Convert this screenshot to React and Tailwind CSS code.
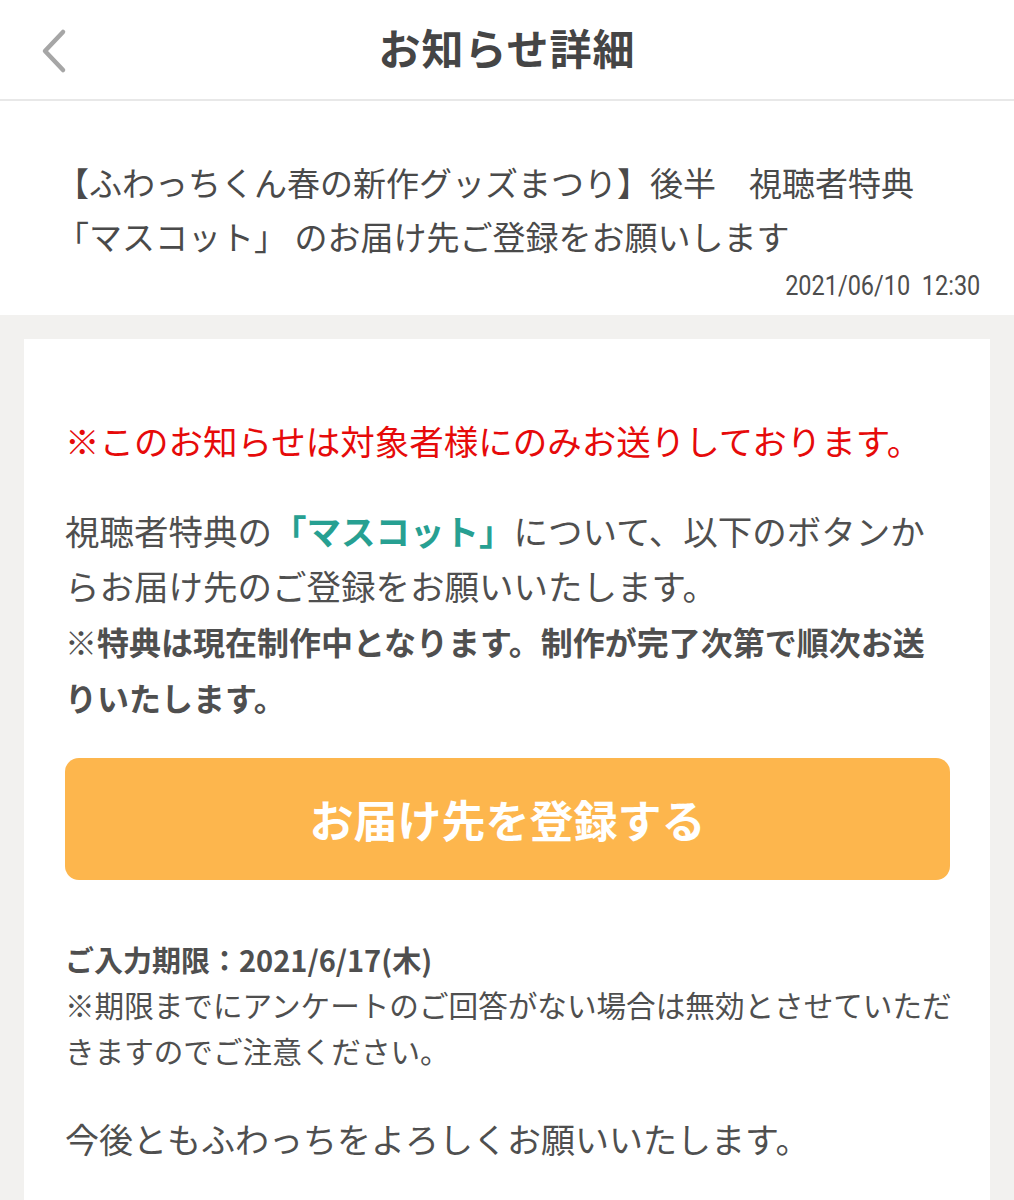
import React from 'react'

const JP = { fontFamily: '"Noto Sans CJK JP", "Noto Sans", sans-serif' }

function Header() {
  return (
    <div className="relative h-[101px] flex items-center justify-center bg-white border-b-2 border-[#e8e8e8]">
      <button className="absolute left-[40px] top-[28px] w-[30px] h-[46px] flex items-center justify-center">
        <svg width="30" height="46" viewBox="0 0 30 46" fill="none">
          <polyline points="23,4 5,23 23,42" stroke="#a6a6a6" strokeWidth="4.5" strokeLinecap="round" strokeLinejoin="round" />
        </svg>
      </button>
      <h1 className="text-[42px] font-bold text-[#454545] tracking-[1px] mt-[-6px]">お知らせ詳細</h1>
    </div>
  )
}

function NoticeTitle() {
  return (
    <div className="bg-white pl-[56px] pr-[34px] pt-[54px] pb-[14px]">
      <p className="text-[33px] leading-[54px] text-[#4a4a4a] whitespace-nowrap">
        【ふわっちくん春の新作グッズまつり】後半　視聴者特典<br />
        「マスコット」 のお届け先ご登録をお願いします
      </p>
      <div className="mt-[8px] flex justify-end">
        <span
          className="inline-block text-[27px] leading-[30px] text-[#4d4d4d] origin-right scale-x-[0.87]"
          style={{ fontFamily: 'Roboto, "Liberation Sans", sans-serif' }}
        >
          2021/06/10&nbsp;&nbsp;12:30
        </span>
      </div>
    </div>
  )
}

export default function App() {
  return (
    <div className="w-[1014px] h-[1200px] overflow-hidden bg-[#f2f1ef]" style={JP}>
      <Header />
      <NoticeTitle />
      <div className="pt-[24px] px-[24px]">
        <div className="bg-white pl-[41px] pr-[30px] pt-[74px] pb-[60px]">
          <p className="text-[34.5px] leading-[55px] text-[#e60a0a] whitespace-nowrap">
            ※このお知らせは対象者様にのみお送りしております。
          </p>

          <p className="mt-[35px] text-[34.5px] leading-[55px] text-[#4f4f4f] whitespace-nowrap">
            視聴者特典の<span className="font-bold text-[#27a092]">「マスコット」</span>について、以下のボタンか<br />
            らお届け先のご登録をお願いいたします。<br />
            <span className="font-bold text-[32px]">
              ※特典は現在制作中となります。制作が完了次第で順次お送<br />
              りいたします。
            </span>
          </p>

          <div className="pr-[10px]">
            <button className="mt-[33px] w-full h-[122px] rounded-[14px] bg-[#fdb64d] flex items-center justify-center">
              <span className="text-[44px] font-bold text-white">お届け先を登録する</span>
            </button>
          </div>

          <div className="mt-[56px] text-[29.6px] leading-[46px] text-[#4f4f4f] whitespace-nowrap">
            <p className="font-bold text-[29px]">ご入力期限：2021/6/17(木)</p>
            <p>
              ※期限までにアンケートのご回答がない場合は無効とさせていただ<br />
              きますのでご注意ください。
            </p>
          </div>

          <p className="mt-[37px] text-[34px] leading-[55px] text-[#4f4f4f]">
            今後ともふわっちをよろしくお願いいたします。
          </p>
        </div>
      </div>
    </div>
  )
}
